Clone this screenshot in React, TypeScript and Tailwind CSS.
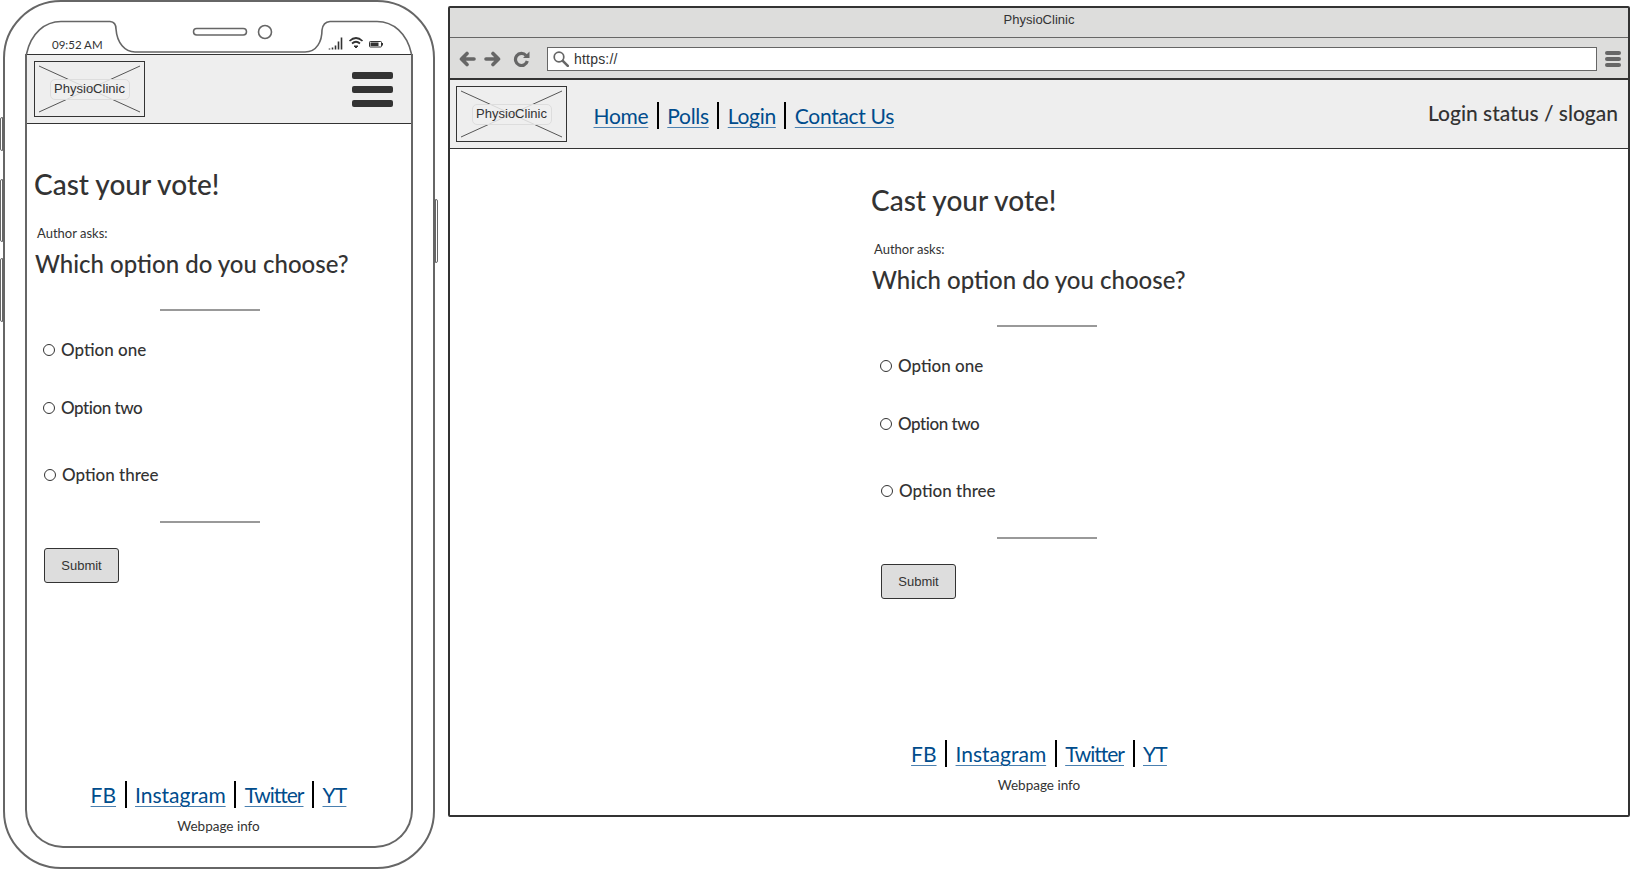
import React from "react";

const linkCls = "px-[0.5px] text-[#004c8c] underline decoration-1 decoration-[#4a80b0] underline-offset-[3px] text-[21px] leading-[27px]";

function Sep() {
  return <span className="mx-[8px] h-[27px] w-[2px] shrink-0 bg-black" />;
}

function Links({ items, tight }: { items: { t: string; c?: string }[]; tight?: boolean }) {
  return (
    <div className={tight ? "flex items-center tracking-[-0.3px]" : "flex items-center"}>
      {items.map((it, i) => (
        <React.Fragment key={it.t}>
          {i > 0 && <Sep />}
          <a className={`${linkCls} ${it.c ?? ""}`}>{it.t}</a>
        </React.Fragment>
      ))}
    </div>
  );
}

function Logo() {
  return (
    <div className="relative flex h-[56px] w-[111px] shrink-0 items-center justify-center border border-[#333] bg-[#eeeeee]">
      <svg className="absolute inset-0 h-full w-full" viewBox="0 0 109 54">
        <path d="M4 4 L105 50 M105 4 L4 50" stroke="#555" strokeWidth="1" fill="none" />
      </svg>
      <span className="relative flex h-[21px] w-[80px] items-center justify-center rounded-[5px] border border-[#dddddd] bg-[#eeeeee]/85 font-['Liberation_Sans',sans-serif] text-[13px] text-[#333]">
        PhysioClinic
      </span>
    </div>
  );
}

function Radio({ label, h, shift, c }: { label: string; h: string; shift?: boolean; c?: string }) {
  return (
    <div className={`flex items-center ${h} ${shift ? "pl-[1px]" : ""}`}>
      <span className="h-[12px] w-[12px] rounded-full border border-[#333]" />
      <span className={`ml-[6px] text-[17px] font-medium leading-[22px] text-[#333] ${c ?? ""}`}>{label}</span>
    </div>
  );
}

function Poll() {
  return (
    <div className="flex w-[360px] flex-col text-[#333]">
      <h1 className="text-[28px] font-medium leading-[34px]">Cast your vote!</h1>
      <p className="ml-[3px] mt-[24px] text-[13px] leading-[16px]">Author asks:</p>
      <h2 className="ml-[1px] mt-[8px] text-[24px] font-medium leading-[30px]">Which option do you choose?</h2>
      <div className="ml-[126px] mt-[30px] h-[2px] w-[100px] bg-[#999]" />
      <div className="ml-[9px] mt-[28px] flex flex-col">
        <Radio label="Option one" h="h-[22px]" />
        <Radio label="Option two" h="h-[22px] mt-[36px]" c="tracking-[-0.45px]" />
        <Radio label="Option three" h="h-[22px] mt-[45px]" shift />
      </div>
      <div className="ml-[126px] mt-[35px] h-[2px] w-[100px] bg-[#999]" />
      <button className="ml-[10px] mt-[25px] flex h-[35px] w-[75px] items-center justify-center rounded-[3px] border border-[#333] bg-[#dddddd] font-['Liberation_Sans',sans-serif] text-[13px] text-[#333]">
        Submit
      </button>
    </div>
  );
}

function Footer() {
  return (
    <div className="flex flex-col items-center">
      <Links
        items={[
          { t: "FB" },
          { t: "Instagram" },
          { t: "Twitter", c: "tracking-[-1px]" },
          { t: "YT", c: "tracking-[-0.8px]" },
        ]}
      />
      <p className="mt-[10px] text-[13.5px] leading-[16px] text-[#333]">Webpage info</p>
    </div>
  );
}

function Phone() {
  return (
    <div className="relative ml-[3px] h-[869px] w-[432px] shrink-0 rounded-[58px] border-2 border-[#666] pl-[20px] pt-[19px]">
      <span className="absolute -left-[5px] top-[115px] h-[34px] w-[3px] rounded-l-[2px] border border-[#666] bg-white" />
      <span className="absolute -left-[5px] top-[177px] h-[63px] w-[3px] rounded-l-[2px] border border-[#666] bg-white" />
      <span className="absolute -left-[5px] top-[256px] h-[64px] w-[3px] rounded-l-[2px] border border-[#666] bg-white" />
      <span className="absolute -right-[5px] top-[197px] h-[64px] w-[3px] rounded-r-[2px] border border-[#666] bg-white" />
      <div className="flex h-[827px] w-[388px] flex-col">
        <div className="relative h-[33px] shrink-0">
          <svg className="absolute left-0 top-0 overflow-visible" width="388" height="33" viewBox="0 0 388 33">
            <path
              d="M1.5 33 C6 12 20 0.5 36 0.5 L85 0.5 Q91 1 91 8 C92 22 100 31 110 31 L280 31 C292 31 297 20 297 9 Q298 1 305 0.5 L352 0.5 C368 0.5 382 12 386.5 33"
              fill="none"
              stroke="#666"
              strokeWidth="1.6"
            />
            <rect x="168.5" y="7.5" width="53" height="6.5" rx="3.2" fill="none" stroke="#666" strokeWidth="1.5" />
            <circle cx="240" cy="11" r="6.5" fill="none" stroke="#666" strokeWidth="1.6" />
            <path d="M304.5 28.5 v-1 M307.5 28.5 v-2 M310.5 28.5 v-4 M313.5 28.5 v-8 M316.5 28.5 v-12" stroke="#333" strokeWidth="1.6" fill="none" />
            <path d="M324.5 20 Q331 14 337.5 20 M327 22.5 Q331 19 335 22.5" stroke="#333" strokeWidth="1.7" fill="none" />
            <path d="M329 25 L331 27 L333 25 Z" stroke="#333" strokeWidth="1" fill="#333" />
            <rect x="344.5" y="20.5" width="12" height="5.5" rx="0.8" fill="none" stroke="#333" strokeWidth="1" />
            <rect x="345.5" y="21.5" width="8" height="3.5" fill="#333" />
            <rect x="357" y="22" width="1" height="2.5" fill="#333" />
          </svg>
          <span className="absolute left-[27px] top-[16px] text-[11.5px] leading-[16px] text-[#333]">09:52 AM</span>
        </div>
        <div className="flex min-h-0 flex-1 flex-col rounded-b-[38px] border-2 border-t-0 border-[#666]">
          <header className="flex h-[70px] shrink-0 items-center justify-between border-y border-y-[#333] bg-[#eeeeee] pl-[7px] pr-[18px]">
            <Logo />
            <div className="flex w-[41px] flex-col gap-[7px]">
              <span className="h-[7px] rounded-[2px] bg-[#333]" />
              <span className="h-[7px] rounded-[2px] bg-[#333]" />
              <span className="h-[7px] rounded-[2px] bg-[#333]" />
            </div>
          </header>
          <main className="flex flex-1 flex-col pt-[43px]">
            <div className="pl-[7px]">
              <Poll />
            </div>
            <div className="mt-auto pb-[12px] pr-[1px]">
              <Footer />
            </div>
          </main>
        </div>
      </div>
    </div>
  );
}

function Browser() {
  return (
    <div className="ml-[13px] mr-[1px] mt-[6px] flex h-[811px] flex-1 flex-col rounded-[2px] border-2 border-[#333]">
      <div className="flex h-[30px] shrink-0 items-center justify-center border-b border-[#666] bg-[#dddddc] pb-[6px] font-['Liberation_Sans',sans-serif] text-[13px] text-[#333]">
        PhysioClinic
      </div>
      <div className="flex h-[42px] shrink-0 items-center border-b-2 border-[#333] bg-[#dddddc] pl-[9px] pr-[7px] pt-[2px]">
        <svg width="17" height="16" viewBox="0 0 17 16">
          <path d="M15 8 H3 M8 2.5 L2.5 8 L8 13.5" fill="none" stroke="#666" strokeWidth="3.6" strokeLinecap="round" strokeLinejoin="round" />
        </svg>
        <svg className="ml-[8px]" width="17" height="16" viewBox="0 0 17 16">
          <path d="M2 8 H14 M9 2.5 L14.5 8 L9 13.5" fill="none" stroke="#666" strokeWidth="3.6" strokeLinecap="round" strokeLinejoin="round" />
        </svg>
        <svg className="ml-[12px]" width="17" height="16" viewBox="0 0 17 16">
          <path d="M13 4.5 A6 6 0 1 0 14.3 10" fill="none" stroke="#666" strokeWidth="3.2" />
          <path d="M10 7 L16.5 7 L16.5 0.5 Z" fill="#666" />
        </svg>
        <div className="relative ml-[17px] flex h-[24px] flex-1 items-center border border-[#666] bg-white pl-[26px] font-['Liberation_Sans',sans-serif] text-[14px] tracking-[0.2px] text-[#333]">
          <svg className="absolute left-[5px] top-[3px]" width="16" height="16" viewBox="0 0 16 16">
            <circle cx="6" cy="6" r="4.8" fill="none" stroke="#666" strokeWidth="1.7" />
            <path d="M9.8 9.8 L14.8 14.8" stroke="#666" strokeWidth="2.6" strokeLinecap="round" />
          </svg>
          https://
        </div>
        <div className="ml-[8px] flex w-[16px] flex-col gap-[2px]">
          <span className="h-[4px] rounded-[2px] bg-[#666]" />
          <span className="h-[4px] rounded-[2px] bg-[#666]" />
          <span className="h-[4px] rounded-[2px] bg-[#666]" />
        </div>
      </div>
      <header className="flex h-[69px] shrink-0 items-center border-b border-[#333] bg-[#eeeeee] pl-[6px] pr-[10px]">
        <Logo />
        <div className="ml-[26px] mt-[3px]">
          <Links tight items={[{ t: "Home" }, { t: "Polls" }, { t: "Login" }, { t: "Contact Us" }]} />
        </div>
        <span className="ml-auto mb-[3px] text-[21px] font-medium leading-[26px] text-[#333]">Login status / slogan</span>
      </header>
      <main className="flex flex-1 flex-col pt-[34px]">
        <div className="pl-[421px]">
          <Poll />
        </div>
        <div className="mt-auto pb-[22px]">
          <Footer />
        </div>
      </main>
    </div>
  );
}

export default function App() {
  return (
    <div className="flex h-[870px] w-[1631px] overflow-hidden bg-white font-['Lato',sans-serif]">
      <Phone />
      <Browser />
    </div>
  );
}
